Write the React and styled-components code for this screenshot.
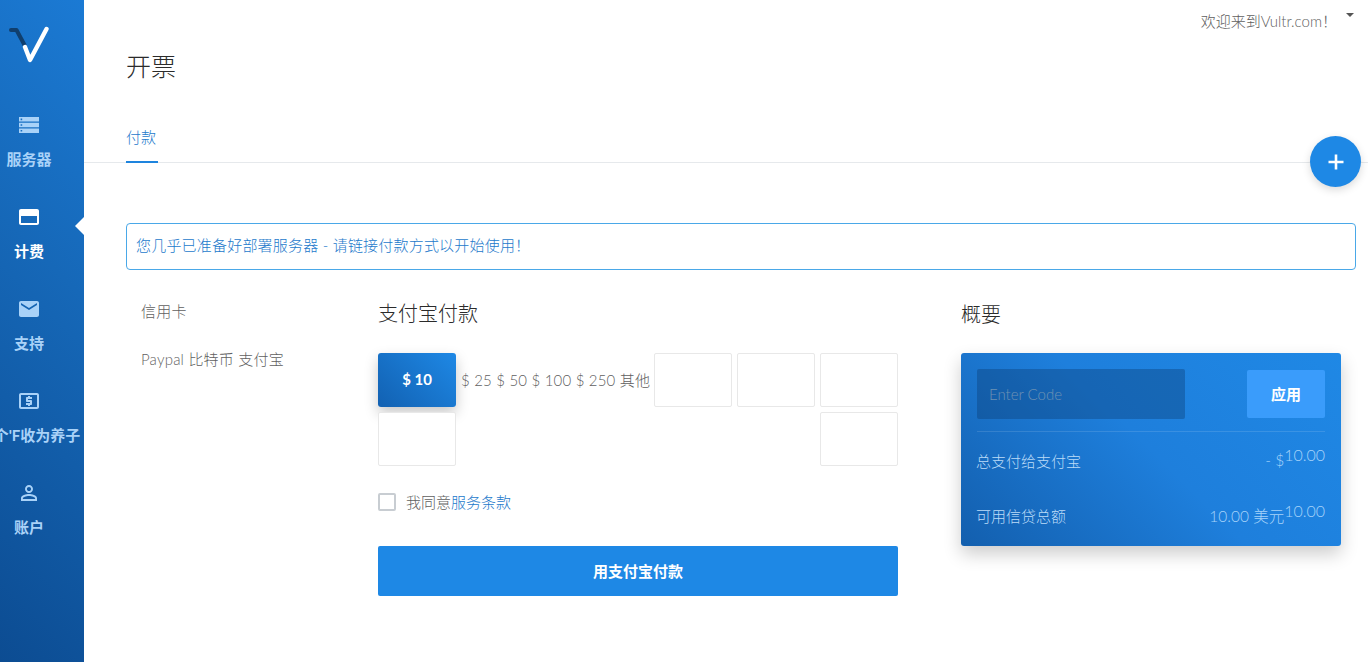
import styled, { createGlobalStyle } from "styled-components";

const icons = {
  dns: "M2 4h20v4.6H2zM2 9.7h20v4.6H2zM2 15.4h20V20H2zM3.6 5.6h1.6v1.6H3.6zM3.6 11.2h1.6v1.6H3.6zM3.6 17h1.6v1.6H3.6z",
  card: "M20 4H4c-1.11 0-1.99.89-1.99 2L2 18c0 1.11.89 2 2 2h16c1.11 0 2-.89 2-2V6c0-1.11-.89-2-2-2zm0 14H4v-7h16v7z",
  mail: "M20 4H4c-1.1 0-1.99.9-1.99 2L2 18c0 1.1.9 2 2 2h16c1.1 0 2-.9 2-2V6c0-1.1-.9-2-2-2zm0 4l-8 5-8-5V6l8 5 8-5v2z",
  money: "M11 17h2v-1h1c.55 0 1-.45 1-1v-3c0-.55-.45-1-1-1h-3v-1h4V8h-2V7h-2v1h-1c-.55 0-1 .45-1 1v3c0 .55.45 1 1 1h3v1H9v2h2v1zm9-13H4c-1.11 0-1.99.89-1.99 2L2 18c0 1.11.89 2 2 2h16c1.11 0 2-.89 2-2V6c0-1.11-.89-2-2-2zm0 14H4V6h16v12z",
  person: "M12 5.9c1.16 0 2.1.94 2.1 2.1s-.94 2.1-2.1 2.1S9.9 9.16 9.9 8s.94-2.1 2.1-2.1m0 9c2.97 0 6.1 1.46 6.1 2.1v1.1H5.9V17c0-.64 3.13-2.1 6.1-2.1M12 4C9.79 4 8 5.79 8 8s1.79 4 4 4 4-1.79 4-4-1.79-4-4-4zm0 9c-2.67 0-8 1.34-8 4v3h16v-3c0-2.66-5.33-4-8-4z",
};

const navItems = [
  { icon: "dns", label: "服务器" },
  { icon: "card", label: "计费", active: true },
  { icon: "mail", label: "支持" },
  { icon: "money", label: "个'F收为养子", wide: true },
  { icon: "person", label: "账户" },
];

function App() {
  return (
    <Page>
      <GlobalStyle />
      <Sidebar>
        <LogoBox>
          <svg width="40" height="40" viewBox="0 0 40 40">
            <path d="M2 5h5.5l8 15" fill="none" stroke="#103f6e" strokeWidth="4" strokeLinecap="round" strokeLinejoin="round" />
            <path d="M16 22l5 13L37.5 4" fill="none" stroke="#fff" strokeWidth="4.4" strokeLinecap="round" strokeLinejoin="round" />
          </svg>
        </LogoBox>
        {navItems.map((item) => (
          <NavItem key={item.label} $active={item.active}>
            <svg width="24" height="24" viewBox="0 0 24 24" fill="currentColor" fillRule="evenodd">
              <path d={icons[item.icon]} />
            </svg>
            <NavLabel $wide={item.wide}>{item.label}</NavLabel>
          </NavItem>
        ))}
      </Sidebar>
      <Main>
        <TopBar>
          <span>欢迎来到Vultr.com！</span>
          <Caret />
        </TopBar>
        <Title>开票</Title>
        <Tabs>
          <Tab>付款</Tab>
          <Fab>
            <svg width="18" height="18" viewBox="0 0 18 18">
              <path d="M9 1.5v15M1.5 9h15" stroke="#fff" strokeWidth="2.6" />
            </svg>
          </Fab>
        </Tabs>
        <Alert>您几乎已准备好部署服务器 - 请链接付款方式以开始使用！</Alert>
        <Columns>
          <Methods>
            <span>信用卡</span>
            <span>Paypal 比特币 支付宝</span>
          </Methods>
          <Payment>
            <Heading $tight>支付宝付款</Heading>
            <AmountRow>
              <SelectedAmount>$ 10</SelectedAmount>
              <AmountText>$ 25 $ 50 $ 100 $ 250 其他</AmountText>
              <EmptyBox />
              <EmptyBox />
              <EmptyBox />
            </AmountRow>
            <AmountRow $second>
              <EmptyBox />
              <EmptyBox />
            </AmountRow>
            <Agree>
              <Checkbox />
              <span>我同意<TermsLink>服务条款</TermsLink></span>
            </Agree>
            <PayButton>用支付宝付款</PayButton>
          </Payment>
          <Summary>
            <Heading>概要</Heading>
            <SummaryCard>
              <CodeRow>
                <CodeInput placeholder="Enter Code" />
                <ApplyButton>应用</ApplyButton>
              </CodeRow>
              <SummaryRow>
                <span>总支付给支付宝</span>
                <SummaryValue>- $<sup>10.00</sup></SummaryValue>
              </SummaryRow>
              <SummaryRow $last>
                <span>可用信贷总额</span>
                <SummaryValue>10.00 美元<sup>10.00</sup></SummaryValue>
              </SummaryRow>
            </SummaryCard>
          </Summary>
        </Columns>
      </Main>
    </Page>
  );
}

export default App;

const GlobalStyle = createGlobalStyle`
  html, body {
    margin: 0;
    height: 100%;
    overflow: hidden;
    background: #fff;
  }
  body {
    font-family: Lato, "Noto Sans CJK SC", sans-serif;
    font-weight: 300;
    color: #555;
  }
  * { box-sizing: border-box; }
`;

const Page = styled.div`
  display: flex;
  height: 662px;
`;

const Sidebar = styled.nav`
  width: 84px;
  flex-shrink: 0;
  overflow: hidden;
  background: linear-gradient(45deg, #0c4c92 0%, #1668b8 60%, #1b7ad4 100%);
  display: flex;
  flex-direction: column;
`;

const LogoBox = styled.div`
  height: 113px;
  padding: 25px 0 0 9px;
`;

const NavItem = styled.a`
  position: relative;
  width: 84px;
  height: 92px;
  padding-right: 26px;
  display: flex;
  flex-direction: column;
  align-items: center;
  color: ${(p) => (p.$active ? "#fff" : "#a9d2f8")};
  &::after {
    content: "";
    display: ${(p) => (p.$active ? "block" : "none")};
    position: absolute;
    right: 0;
    top: 12px;
    border: 9px solid transparent;
    border-right-color: #fff;
    border-left-width: 0;
  }
`;

const NavLabel = styled.span`
  margin-top: 12px;
  margin-left: ${(p) => (p.$wide ? "16px" : "0")};
  font-size: 15px;
  line-height: 20px;
  font-weight: 700;
  white-space: nowrap;
`;

const Main = styled.main`
  flex: 1;
  min-width: 0;
  position: relative;
`;

const TopBar = styled.div`
  position: absolute;
  top: 11px;
  right: 14px;
  display: flex;
  font-size: 15px;
  line-height: 20px;
  color: #5f5f5f;
`;

const Caret = styled.i`
  width: 0;
  height: 0;
  margin: 2px 0 0 9px;
  border: 4px solid transparent;
  border-top-color: #555;
`;

const Title = styled.h1`
  margin: 0;
  padding: 48px 0 0 42px;
  height: 122px;
  font-size: 25px;
  line-height: 36px;
  font-weight: 300;
  color: #2b2b2b;
`;

const Tabs = styled.div`
  position: relative;
  height: 41px;
  padding-left: 42px;
  border-bottom: 1px solid #e6e9ec;
`;

const Tab = styled.a`
  display: inline-block;
  height: 41px;
  width: 32px;
  font-size: 15px;
  line-height: 30px;
  color: #1c79cb;
  border-bottom: 2px solid #1e84de;
`;

const Fab = styled.button`
  position: absolute;
  top: 14px;
  right: 7px;
  width: 51px;
  height: 51px;
  border: 0;
  border-radius: 50%;
  background: #1e88e5;
  box-shadow: 0 3px 8px rgba(0, 0, 0, 0.15);
  display: flex;
  align-items: center;
  justify-content: center;
`;

const Alert = styled.div`
  margin: 60px 12px 0 42px;
  height: 47px;
  padding-left: 9px;
  border: 1px solid #4aa8e8;
  border-radius: 4px;
  font-size: 15px;
  line-height: 43px;
  letter-spacing: 0.2px;
  color: #1c79cb;
`;

const Columns = styled.div`
  display: flex;
  margin-left: 42px;
`;

const Methods = styled.div`
  width: 252px;
  padding: 31px 0 0 15px;
  display: flex;
  flex-direction: column;
  gap: 28px;
  font-size: 15px;
  line-height: 20px;
  letter-spacing: 0.2px;
  color: #5f5f5f;
`;

const Payment = styled.section`
  width: 520px;
`;

const Heading = styled.h2`
  margin: 0;
  padding-top: ${(p) => (p.$tight ? "28px" : "29px")};
  height: 83px;
  font-size: 20px;
  line-height: 30px;
  font-weight: 300;
  color: #2b2b2b;
`;

const AmountRow = styled.div`
  display: flex;
  justify-content: ${(p) => (p.$second ? "space-between" : "flex-start")};
  align-items: center;
  gap: 5px;
  margin-bottom: 5px;
`;

const EmptyBox = styled.div`
  width: 78px;
  height: 54px;
  border: 1px solid #e8e8e8;
  border-radius: 2px;
  background: #fff;
`;

const SelectedAmount = styled.div`
  width: 78px;
  height: 54px;
  border-radius: 3px;
  background: linear-gradient(45deg, #1261b2 0%, #1e88e5 100%);
  box-shadow: 0 6px 14px rgba(0, 0, 0, 0.22);
  color: #fff;
  font-size: 15px;
  font-weight: 700;
  line-height: 52px;
  text-align: center;
`;

const AmountText = styled.div`
  width: 188px;
  font-size: 15px;
  line-height: 20px;
  letter-spacing: 0.2px;
  white-space: nowrap;
  color: #5f5f5f;
`;

const Agree = styled.label`
  display: flex;
  align-items: center;
  gap: 10px;
  margin-top: 22px;
  height: 28px;
  font-size: 15px;
  line-height: 26px;
  color: #5f5f5f;
`;

const Checkbox = styled.i`
  width: 18px;
  height: 18px;
  border: 2px solid #c8cdd2;
  border-radius: 2px;
`;

const TermsLink = styled.a`
  color: #1c79cb;
`;

const PayButton = styled.button`
  display: block;
  width: 100%;
  height: 50px;
  margin-top: 30px;
  padding-bottom: 2px;
  border: 0;
  border-radius: 2px;
  background: #1e88e5;
  color: #fff;
  font: 700 15px Lato, "Noto Sans CJK SC", sans-serif;
`;

const Summary = styled.aside`
  width: 380px;
  margin-left: 63px;
`;

const SummaryCard = styled.div`
  height: 193px;
  padding: 16px;
  border-radius: 3px;
  background: linear-gradient(45deg, #135fae 0%, #1e7fdc 50%, #1f88e5 100%);
  box-shadow: 0 8px 18px rgba(0, 0, 0, 0.2);
`;

const CodeRow = styled.div`
  display: flex;
  justify-content: space-between;
  align-items: center;
  height: 63px;
  padding-bottom: 13px;
  border-bottom: 1px solid rgba(255, 255, 255, 0.12);
`;

const CodeInput = styled.input`
  width: 208px;
  height: 50px;
  padding: 0 12px;
  border: 0;
  outline: 0;
  border-radius: 2px;
  background: rgba(10, 60, 115, 0.38);
  font: 300 15px Lato, sans-serif;
  &::placeholder {
    color: #6f92b4;
  }
`;

const ApplyButton = styled.button`
  width: 78px;
  height: 48px;
  padding-bottom: 2px;
  border: 0;
  border-radius: 2px;
  background: #3a9cfb;
  color: #fff;
  font: 700 15px Lato, "Noto Sans CJK SC", sans-serif;
`;

const SummaryRow = styled.div`
  display: flex;
  justify-content: space-between;
  align-items: center;
  height: 20px;
  margin-top: ${(p) => (p.$last ? "35px" : "18px")};
  margin-left: -1px;
  font-size: 15px;
  color: #bcdcf8;
`;

const SummaryValue = styled.span`
  font-size: 15.5px;
  color: #a6d3fa;
  & sup {
    position: relative;
    top: 1px;
    vertical-align: super;
    line-height: 0;
    font-size: 16px;
  }
`;
